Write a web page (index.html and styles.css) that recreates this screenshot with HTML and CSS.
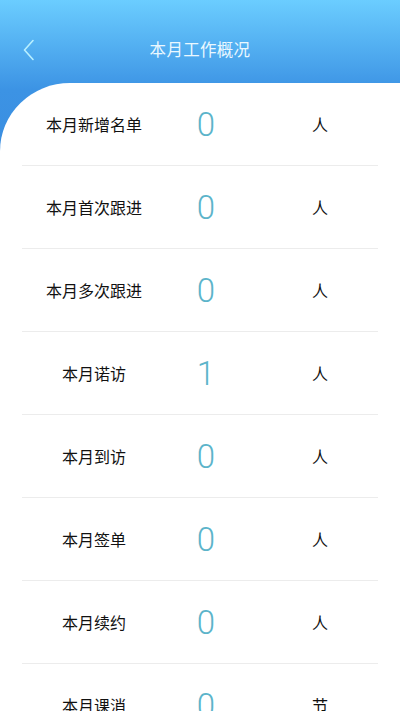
FILE: index.html
```html
<!DOCTYPE html>
<html lang="zh">
<head>
<meta charset="utf-8">
<link rel="stylesheet" href="styles.css">
</head>
<body>
<div class="page">
  <header class="nav">
    <svg class="back" width="14" height="22" viewBox="0 0 14 22"><path d="M11 1.5 L2.5 11 L11 20.5" fill="none" stroke="#b8f0ff" stroke-width="1.6" stroke-linecap="round" stroke-linejoin="round"/></svg>
    <h1 class="title">本月工作概况</h1>
  </header>
  <main class="card">
    <div class="row"><span class="label">本月新增名单</span><span class="num">0</span><span class="unit">人</span></div>
    <div class="row"><span class="label">本月首次跟进</span><span class="num">0</span><span class="unit">人</span></div>
    <div class="row"><span class="label">本月多次跟进</span><span class="num">0</span><span class="unit">人</span></div>
    <div class="row"><span class="label">本月诺访</span><span class="num">1</span><span class="unit">人</span></div>
    <div class="row"><span class="label">本月到访</span><span class="num">0</span><span class="unit">人</span></div>
    <div class="row"><span class="label">本月签单</span><span class="num">0</span><span class="unit">人</span></div>
    <div class="row"><span class="label">本月续约</span><span class="num">0</span><span class="unit">人</span></div>
    <div class="row"><span class="label">本月课消</span><span class="num">0</span><span class="unit">节</span></div>
  </main>
</div>
</body>
</html>
```
FILE: styles.css
```css
html, body {
  margin: 0;
  padding: 0;
  height: 100%;
  overflow: hidden;
}
body {
  font-family: "Noto Sans CJK SC", "Noto Sans", sans-serif;
  background: #fff;
}
.page {
  background: linear-gradient(180deg, #6bcdff 0px, #3c93e4 90px, #3a8de0 160px, #ffffff 160px);
  min-height: 100%;
}
.nav {
  height: 83px;
  position: relative;
  display: flex;
  align-items: center;
  justify-content: center;
}
.back {
  position: absolute;
  left: 22px;
  top: 39px;
}
.title {
  margin: 0;
  margin-top: 15px;
  font-size: 16.5px;
  font-weight: 400;
  color: #eaf8ff;
  letter-spacing: 0.3px;
}
.card {
  background: #fff;
  border-top-left-radius: 70px 68px;
  padding: 0 22px;
}
.row {
  display: grid;
  grid-template-columns: 144px 80px 1fr;
  align-items: center;
  height: 82px;
  border-bottom: 1px solid #ececec;
  color: #111;
}
.label {
  text-align: center;
  font-size: 16px;
}
.num {
  text-align: center;
  font-family: Roboto, "Noto Sans", sans-serif;
  font-weight: 300;
  font-size: 33px;
  color: #5cb4ca;
}
.unit {
  text-align: center;
  padding-left: 16px;
  font-size: 16px;
}
```
